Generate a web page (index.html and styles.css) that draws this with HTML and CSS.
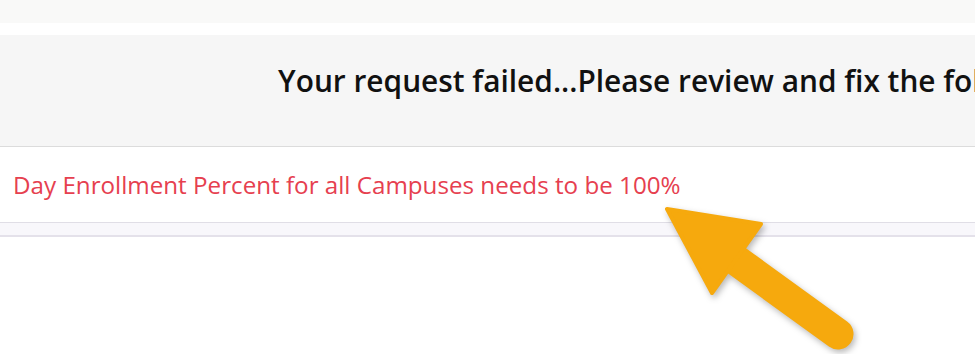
FILE: index.html
```html
<!DOCTYPE html>
<html>
<head>
<meta charset="utf-8">
<link rel="stylesheet" href="styles.css">
</head>
<body>
<div class="page">
  <div class="topbar"></div>
  <div class="modal">
    <div class="modal-header">
      <h2 class="modal-title">Your request failed...Please review and fix the following:</h2>
    </div>
    <div class="modal-body">
      <p class="error-text">Day Enrollment Percent for all Campuses needs to be 100%</p>
    </div>
    <div class="modal-footer"></div>
  </div>
  <svg class="callout-arrow" viewBox="0 0 977 354" width="977" height="354">
    <g class="arrow-shape">
      <line x1="722" y1="250" x2="838" y2="334" stroke="#f6a90d" stroke-width="31" stroke-linecap="round"/>
      <polygon points="667,209 761,224 712,293" fill="#f6a90d" stroke="#f6a90d" stroke-width="4" stroke-linejoin="round"/>
    </g>
  </svg>
</div>
</body>
</html>
```
FILE: styles.css
```css
html, body {
  margin: 0;
  padding: 0;
  background: #ffffff;
}
.page {
  position: relative;
  width: 977px;
  height: 354px;
  overflow: hidden;
}
.topbar {
  height: 23px;
  background: #f9f9f8;
  width: 975px;
}
.modal {
  margin-top: 12px;
  width: 975px;
}
.modal-header {
  height: 112px;
  background: #f6f6f6;
  border-bottom: 1px solid #dcdcdc;
  box-sizing: border-box;
  overflow: hidden;
  padding-top: 31px;
}
.modal-title {
  margin: 0;
  padding-left: 278px;
  white-space: nowrap;
  font-family: "Open Sans", "Noto Sans", sans-serif;
  font-weight: 600;
  font-size: 29.85px;
  color: #111111;
  line-height: 30px;
}
.modal-body {
  height: 76px;
  box-sizing: border-box;
  border-bottom: 1px solid #e0dee6;
  padding-left: 13px;
  display: flex;
  align-items: center;
}
.error-text {
  margin: 0;
  font-family: "Open Sans", "Noto Sans", sans-serif;
  font-size: 24.2px;
  color: #e6404f;
  white-space: nowrap;
}
.modal-footer {
  height: 14px;
  box-sizing: border-box;
  background: #f8f7fb;
  border-bottom: 2px solid #e4e1ea;
}
.callout-arrow {
  position: absolute;
  left: 0;
  top: 0;
  pointer-events: none;
}
.arrow-shape {
  filter: drop-shadow(2px 3px 3px rgba(0, 0, 0, 0.28));
}
```
